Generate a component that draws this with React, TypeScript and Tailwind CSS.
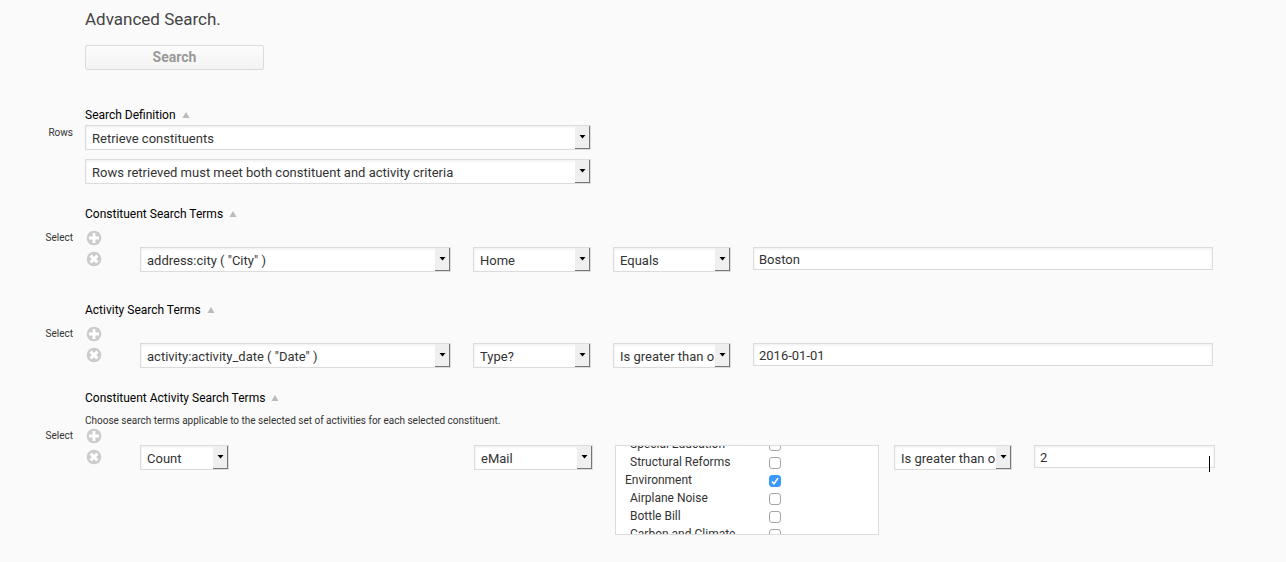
import React from 'react';
import clsx from 'clsx';

const fieldClass =
    'block w-full border border-[#dcdcdc] bg-white text-[13px] text-[#333] shadow-[inset_0_1px_3px_rgba(0,0,0,0.08)] outline-none rounded-none';

const SelectBox: React.FC<{ label: string; value: string; className?: string }> = ({ label, value, className }) => (
    <div className={clsx('relative shrink-0', className)}>
        <select aria-label={label} className={clsx(fieldClass, 'h-[25px] appearance-none pt-0.5 pl-1.5 pr-4')}>
            <option>{value}</option>
        </select>
        <span className="absolute inset-y-px right-px w-[15px] border-r border-b border-[#767676] bg-[#efefef] flex items-center justify-center pointer-events-none">
            <svg className="w-[7px] h-1" viewBox="0 0 7 4">
                <path d="M0.5 0h6L3.5 3.6z" fill="#000" />
            </svg>
        </span>
    </div>
);

const TextBox: React.FC<{ label: string; value: string }> = ({ label, value }) => (
    <input type="text" aria-label={label} defaultValue={value} className={clsx(fieldClass, 'h-[23px] px-[5px] pt-px')} />
);

const RoundButton: React.FC<{ kind: 'add' | 'remove' }> = ({ kind }) => (
    <button type="button" aria-label={kind === 'add' ? 'Add term' : 'Remove term'} className="ml-px w-4 h-4 shrink-0">
        <svg className="w-4 h-4" viewBox="0 0 16 16">
            <circle cx="8" cy="8" r="7.3" fill="#ccc" />
            {kind === 'add' ? (
                <path d="M8 3v10M3 8h10" stroke="#fff" strokeWidth="2.8" />
            ) : (
                <path d="M4.6 4.6l6.8 6.8M11.4 4.6l-6.8 6.8" stroke="#fff" strokeWidth="3" />
            )}
        </svg>
    </button>
);

const Heading: React.FC<{ children: React.ReactNode }> = ({ children }) => (
    <h2 className="col-start-2 h-5 flex items-center gap-1.5 text-[12px] text-black">
        {children}
        <svg className="w-2 h-1.5" viewBox="0 0 8 6">
            <path d="M4 0l3.6 6H0.4z" fill="#bbb" />
        </svg>
    </h2>
);

const TermSection: React.FC<{ title: string; note?: string; className?: string; children: React.ReactNode }> = ({
    title,
    note,
    className,
    children,
}) => (
    <section className={clsx('grid grid-cols-[73px_minmax(0,1fr)] gap-x-3', className)}>
        <Heading>{title}</Heading>
        <p className={clsx('col-start-2 pt-1.5 text-[10px] leading-[14px] text-[#333]', !note && 'h-1.5')}>{note}</p>
        <span className="col-start-1 text-right text-[10px] leading-4 text-[#333]">Select</span>
        <RoundButton kind="add" />
        <div className="col-start-2 mt-px flex items-start">
            <div className="w-[55px] h-6 shrink-0 flex items-center">
                <RoundButton kind="remove" />
            </div>
            {children}
        </div>
    </section>
);

const issues = [
    { name: 'Special Education', child: true },
    { name: 'Structural Reforms', child: true },
    { name: 'Environment', checked: true },
    { name: 'Airplane Noise', child: true },
    { name: 'Bottle Bill', child: true },
    { name: 'Carbon and Climate', child: true },
];

const IssueList: React.FC = () => (
    <div className="w-[264px] h-[90px] shrink-0 border border-[#dcdcdc] bg-white overflow-hidden">
        <div className="-mt-[11px] pl-[9px]">
            {issues.map(({ name, child, checked }) => (
                <label
                    key={name}
                    className="h-[18px] grid grid-cols-[144px_12px] items-center text-[12px] leading-[18px] text-[#333]"
                >
                    <span className={clsx(child && 'pl-[5px]')}>{name}</span>
                    <span className="relative mt-0.5 w-3 h-3">
                        <input
                            type="checkbox"
                            defaultChecked={checked}
                            className="peer block w-3 h-3 appearance-none rounded-[3px] border border-[#a5a5a5] bg-white checked:border-[#3b99fc] checked:bg-[#3b99fc]"
                        />
                        <svg className="absolute inset-0 w-3 h-3 hidden peer-checked:block pointer-events-none" viewBox="0 0 12 12">
                            <path d="M3 6.4l2 2.3 4-5.6" fill="none" stroke="#fff" strokeWidth="1.6" />
                        </svg>
                    </span>
                </label>
            ))}
        </div>
    </div>
);

const App: React.FC = () => (
    <main className="min-h-screen bg-[#fafafa] pt-2.5 pb-6 pr-[71px] font-['Roboto',sans-serif]">
        <div className="pl-[85px]">
            <h1 className="text-[17px] leading-[18px] text-[#444]">Advanced Search.</h1>
            <button
                type="button"
                className="mt-[17px] block w-[179px] h-[25px] rounded-[2px] border border-[#dcdcdc] bg-linear-to-b from-[#fcfcfc] to-[#f3f3f3] text-[14px] font-bold text-[#999]"
            >
                Search
            </button>
        </div>

        <section className="mt-[35px] grid grid-cols-[73px_minmax(0,1fr)] gap-x-3">
            <Heading>Search Definition</Heading>
            <span className="col-start-1 text-right text-[10px] leading-4 text-[#333]">Rows</span>
            <div className="w-[506px] flex flex-col gap-[9px]">
                <SelectBox label="Rows" value="Retrieve constituents" />
                <SelectBox label="Criteria" value="Rows retrieved must meet both constituent and activity criteria" />
            </div>
        </section>

        <TermSection title="Constituent Search Terms" className="mt-5">
            <div className="flex-1 flex items-start gap-[22px] pr-0.5">
                <SelectBox label="Field" value={'address:city ( "City" )'} className="w-[311px]" />
                <SelectBox label="Type" value="Home" className="w-[118px]" />
                <SelectBox label="Comparison" value="Equals" className="w-[118px]" />
                <TextBox label="Value" value="Boston" />
            </div>
        </TermSection>

        <TermSection title="Activity Search Terms" className="mt-7">
            <div className="flex-1 flex items-start gap-[22px] pr-0.5">
                <SelectBox label="Field" value={'activity:activity_date ( "Date" )'} className="w-[311px]" />
                <SelectBox label="Type" value="Type?" className="w-[118px]" />
                <SelectBox label="Comparison" value="Is greater than or equal" className="w-[118px]" />
                <TextBox label="Value" value="2016-01-01" />
            </div>
        </TermSection>

        <TermSection
            title="Constituent Activity Search Terms"
            note="Choose search terms applicable to the selected set of activities for each selected constituent."
            className="mt-5"
        >
            <div className="flex-1 flex items-start gap-[22px]">
                <div className="w-[312px] shrink-0">
                    <SelectBox label="Aggregate" value="Count" className="w-[89px]" />
                </div>
                <SelectBox label="Type" value="eMail" className="w-[119px]" />
                <div className="flex-1 flex items-start">
                    <IssueList />
                    <SelectBox label="Comparison" value="Is greater than or equal" className="ml-[15px] mr-[22px] w-[118px]" />
                    <div className="relative flex-1">
                        <TextBox label="Value" value="2" />
                        <span className="absolute top-[11px] right-[5px] w-px h-4 bg-black"></span>
                    </div>
                </div>
            </div>
        </TermSection>
    </main>
);

export default App;
